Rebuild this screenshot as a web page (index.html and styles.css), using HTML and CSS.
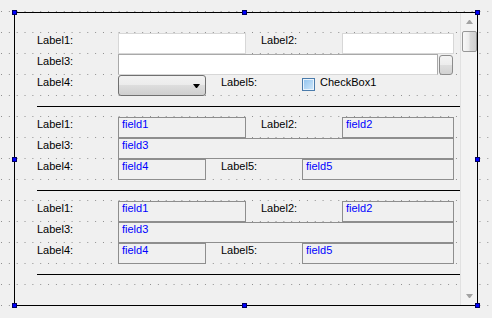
FILE: index.html
```html
<html>
	<head>
		<title>Form preview</title>
		<link rel="stylesheet" href="styles.css">
	</head>
	<body>
		<div class="form">
			<div class="content">

				<div class="section">
					<div class="row">
						<span class="label">Label1:</span>
						<span class="edit w128"></span>
						<span class="label gap">Label2:</span>
						<span class="edit w112"></span>
					</div>
					<div class="row">
						<span class="label">Label3:</span>
						<span class="edit dark w320"></span>
						<span class="dots-btn"></span>
					</div>
					<div class="row">
						<span class="label">Label4:</span>
						<span class="combo"><i class="arrow"></i></span>
						<span class="label gap">Label5:</span>
						<span class="check"><i class="box"></i>CheckBox1</span>
					</div>
				</div>
				<div class="rule"></div>

				<div class="section">
					<div class="row">
						<span class="label">Label1:</span>
						<span class="field w128">field1</span>
						<span class="label gap">Label2:</span>
						<span class="field w112">field2</span>
					</div>
					<div class="row">
						<span class="label">Label3:</span>
						<span class="field w336">field3</span>
					</div>
					<div class="row">
						<span class="label">Label4:</span>
						<span class="field w88">field4</span>
						<span class="label gap">Label5:</span>
						<span class="field w152">field5</span>
					</div>
				</div>
				<div class="rule"></div>

				<div class="section">
					<div class="row">
						<span class="label">Label1:</span>
						<span class="field w128">field1</span>
						<span class="label gap">Label2:</span>
						<span class="field w112">field2</span>
					</div>
					<div class="row">
						<span class="label">Label3:</span>
						<span class="field w336">field3</span>
					</div>
					<div class="row">
						<span class="label">Label4:</span>
						<span class="field w88">field4</span>
						<span class="label gap">Label5:</span>
						<span class="field w152">field5</span>
					</div>
				</div>
				<div class="rule"></div>

			</div>
			<div class="vscroll">
				<i class="up"></i>
				<i class="thumb"></i>
				<i class="down"></i>
			</div>

			<!-- selection handles -->
			<i class="handle h-tl"></i>
			<i class="handle h-tm"></i>
			<i class="handle h-tr"></i>
			<i class="handle h-ml"></i>
			<i class="handle h-mr"></i>
			<i class="handle h-bl"></i>
			<i class="handle h-bm"></i>
			<i class="handle h-br"></i>
		</div>
	</body>
</html>
```

FILE: styles.css
```css
body{
	margin:0;
	width:492px;
	height:318px;
	overflow:hidden;
	background-color:#8e8e8e;
	background-image:linear-gradient(to right, transparent 1px, #f0f0f0 1px),
		linear-gradient(to bottom, transparent 1px, #f0f0f0 1px);
	background-size:7.85px 21px;
	background-position:1px 11px;
	font-family:"Liberation Sans", Arial, sans-serif;
	font-size:11px;
	line-height:13px;
	color:#000;
}

.form{
	position:relative;
	display:flex;
	box-sizing:border-box;
	width:464px;
	height:294px;
	margin:12px 0 0 14px;
	border:1px solid #000;
}

.content{
	box-sizing:border-box;
	width:445px;
	padding:20px 0 0 22px;
	overflow:hidden;
}

.row{
	display:flex;
	height:21px;
}

.label{
	width:81px;
	padding-top:1px;
	white-space:nowrap;
}
.label.gap{ margin-left:15px; width:81px; }

.w88{ width:88px; }
.w112{ width:112px; }
.w128{ width:128px; }
.w152{ width:152px; }
.w320{ width:320px; }
.w336{ width:336px; }

.edit{
	box-sizing:border-box;
	height:21px;
	background:#fff;
	border:1px solid #d7d7d7;
}
.edit.dark{
	border-color:#a9a9a9;
	border-bottom-color:#d7d7d7;
}

.dots-btn{
	box-sizing:border-box;
	width:14px;
	height:20px;
	margin:1px 0 0 1px;
	border:1px solid #8c8c8c;
	border-radius:3px;
	background:linear-gradient(#f4f4f4, #ececec 50%, #dedede 50%, #d2d2d2);
}

.combo{
	box-sizing:border-box;
	display:flex;
	justify-content:flex-end;
	align-items:center;
	width:88px;
	height:21px;
	padding-right:5px;
	border:1px solid #707070;
	border-radius:3px;
	background:linear-gradient(#f2f2f2, #ebebeb 50%, #dddddd 50%, #cfcfcf);
}
.arrow{
	width:1px;
	height:0;
	border-top:4px solid #000;
	border-left:3px solid transparent;
	border-right:3px solid transparent;
}

.check{
	display:flex;
	padding-top:1px;
	white-space:nowrap;
}
.box{
	box-sizing:border-box;
	width:13px;
	height:13px;
	margin:2px 5px 0 0;
	border:1px solid #4a7bab;
	background:linear-gradient(135deg, #8fc2ee, #d2e9fb);
	box-shadow:inset 0 0 0 1px #eaf4fd;
}

.field{
	box-sizing:border-box;
	height:21px;
	padding:0 3px;
	border:1px solid #8e8e8e;
	background:#f0f0f0;
	color:#0000ff;
	white-space:nowrap;
}

.rule{
	height:1px;
	margin:10px 0;
	background:#000;
}

.vscroll{
	box-sizing:border-box;
	display:flex;
	flex-direction:column;
	align-items:center;
	width:17px;
	background:#f3f3f3;
	border-left:1px solid #e1e1e1;
}
.up{
	width:1px;
	height:0;
	margin-top:7px;
	border-bottom:4px solid #a3a3a3;
	border-left:3px solid transparent;
	border-right:3px solid transparent;
}
.thumb{
	box-sizing:border-box;
	width:15px;
	height:21px;
	margin-top:7px;
	border:1px solid #979797;
	border-radius:2px;
	background:linear-gradient(to right, #f8f8f8, #ececec 45%, #dadada 55%, #cfcfcf);
}
.down{
	width:1px;
	height:0;
	margin-top:auto;
	margin-bottom:7px;
	border-top:4px solid #a3a3a3;
	border-left:3px solid transparent;
	border-right:3px solid transparent;
}

.handle{
	position:absolute;
	box-sizing:border-box;
	width:5px;
	height:5px;
	background:#0000ff;
	border:1px solid #000060;
}
.h-tl{ left:-3px; top:-3px; }
.h-tm{ left:227px; top:-3px; }
.h-tr{ left:460px; top:-3px; }
.h-ml{ left:-3px; top:144px; }
.h-mr{ left:460px; top:144px; }
.h-bl{ left:-3px; top:290px; }
.h-bm{ left:227px; top:290px; }
.h-br{ left:460px; top:290px; }
```
